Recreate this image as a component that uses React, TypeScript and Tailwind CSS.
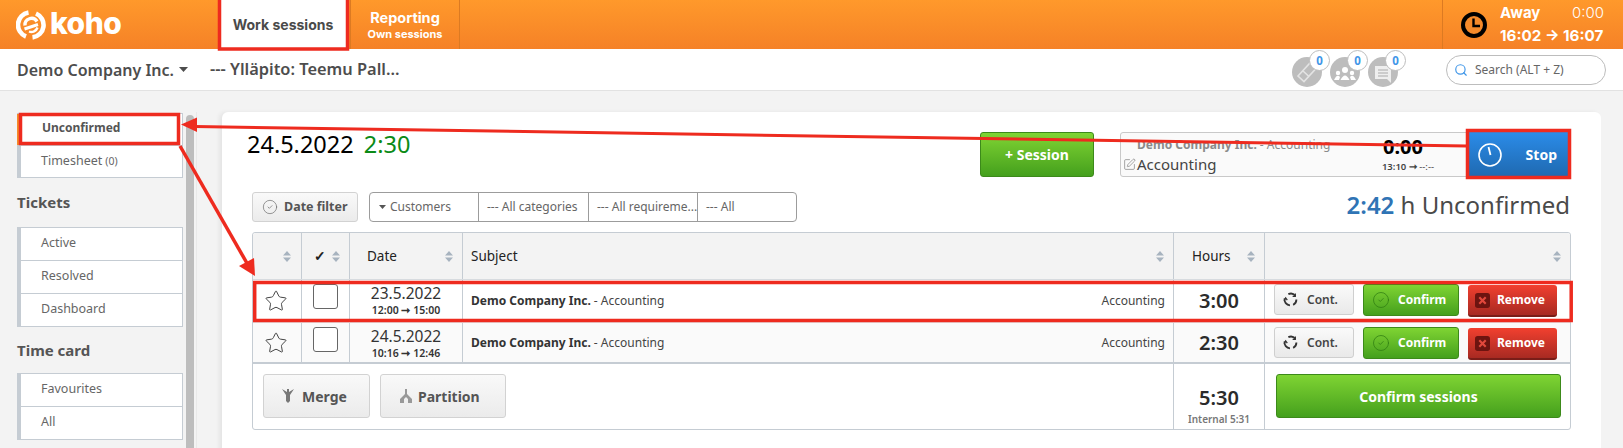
import { Star, CircleCheck, SquarePen, Search } from "lucide-react";

function Sort() {
  return (
    <svg width="8" height="11" viewBox="0 0 8 11" className="shrink-0">
      <path d="M4 0 L8 4.5 H0 Z M4 11 L8 6.5 H0 Z" fill="#a7b3bf" />
    </svg>
  );
}

function ContIcon() {
  return (
    <svg width="15" height="15" viewBox="0 0 14 14" fill="none" stroke="#333" strokeWidth="1.7">
      <path d="M5 2 A5.5 5.5 0 0 1 11.5 3.5" />
      <path d="M12.5 7 A5.5 5.5 0 0 1 9.5 12" />
      <path d="M6.5 12.5 A5.5 5.5 0 0 1 1.5 6" />
      <path d="M11.5 1.5 V4 H9" strokeWidth="1.2" />
      <path d="M1 8 L2.5 5.5 L4 7.5" strokeWidth="1.2" />
    </svg>
  );
}

function XSquare() {
  return (
    <svg width="15" height="15" viewBox="0 0 14 14">
      <rect width="14" height="14" rx="2.5" fill="#6d1410" />
      <path d="M4 4 L10 10 M10 4 L4 10" stroke="#e2483c" strokeWidth="2" />
    </svg>
  );
}

function Row({ date, time, hours, bg }: { date: string; time: string; hours: string; bg: string }) {
  const cell = "border-r border-[#c5ccd3] h-full";
  return (
    <div className={`grid grid-cols-[49px_48px_113px_711px_91px_1fr] items-stretch ${bg}`}>
      <div className={`${cell} flex items-center justify-center pr-[2px]`}>
        <Star size={24} strokeWidth={1} color="#444" />
      </div>
      <div className={`${cell} flex justify-center pt-[4px]`}>
        <div className="w-[25px] h-[25px] rounded-[3px] border border-[#666] bg-white" />
      </div>
      <div className={`${cell} flex flex-col items-center pt-[1px] text-[#333]`}>
        <div className="text-[15.5px] leading-[24px]">{date}</div>
        <div className="text-[10.5px] leading-[12px] font-semibold -mt-[1px]">{time}</div>
      </div>
      <div className={`${cell} flex items-center justify-between pl-[8px] pr-[8px] text-[12px] text-[#444]`}>
        <div><span className="font-bold text-[#333]">Demo Company Inc.</span> - Accounting</div>
        <div>Accounting</div>
      </div>
      <div className={`${cell} flex items-center justify-center text-[20px] font-semibold text-[#2b2b2b]`}>{hours}</div>
      <div className="flex items-start gap-[9px] pl-[9px] pt-[4px]">
        <div className="w-[80px] h-[31px] flex items-center gap-[9px] pl-[8px] rounded-[3px] border border-[#cfcfcf] bg-gradient-to-b from-[#fafafa] to-[#e9e9e9] text-[12px] font-semibold text-[#444]">
          <ContIcon />
          <span>Cont.</span>
        </div>
        <div className="w-[96px] h-[32px] flex items-center gap-[8px] pl-[8px] rounded-[3px] border border-[#3c8a1a] bg-gradient-to-b from-[#7fd433] to-[#44a01d] text-[12px] font-bold text-white">
          <CircleCheck size={18} strokeWidth={1} color="#2f7d12" />
          <span>Confirm</span>
        </div>
        <div className="w-[89px] h-[32px] mt-[1px] flex items-center gap-[7px] pl-[7px] rounded-[3px] border-b-2 border-[#7a1d18] bg-gradient-to-b from-[#f2402f] to-[#a82a22] text-[12px] font-bold text-white">
          <XSquare />
          <span>Remove</span>
        </div>
      </div>
    </div>
  );
}

function SideGroup({ items }: { items: string[] }) {
  return (
    <div className="border border-[#c5ccd3] border-l-[4px] bg-white">
      {items.map((t, i) => (
        <div key={t} className={`flex items-center pl-[20px] pb-[2px] text-[12.5px] text-[#666] ${i ? "h-[33px] border-t border-[#c5ccd3]" : "h-[32px]"}`}>
          {t}
        </div>
      ))}
    </div>
  );
}

function Logo() {
  return (
    <div className="flex items-center gap-[4px] ml-[16px] w-[202px]">
      <svg width="30" height="30" viewBox="0 0 30 30" fill="none" stroke="#fff">
        <path d="M12.5 2.5 A12.5 12.5 0 0 0 10 26.5" strokeWidth="4.6" />
        <path d="M16.5 27.4 A12.5 12.5 0 0 0 20 3.5" strokeWidth="4.6" />
        <path d="M9 15.5 A6.5 6.5 0 0 1 21 11.5" strokeWidth="3.4" />
        <path d="M8.5 19 L22 14.5" strokeWidth="3" />
        <path d="M13 21.5 A6.5 6.5 0 0 0 21.5 17.5" strokeWidth="2.4" />
      </svg>
      <span className="font-['Inter',sans-serif] font-extrabold text-[30px] leading-none tracking-[-0.5px] text-white -mt-[3px]">koho</span>
    </div>
  );
}

function CircleIcon({ children }: { children: React.ReactNode }) {
  return (
    <div className="relative w-[30px] h-[30px] rounded-full bg-[#bdbdbd] flex items-center justify-center">
      {children}
      <div className="absolute -top-[7px] left-[17px] w-[21px] h-[21px] rounded-full bg-white border border-[#bdbdbd] flex items-center justify-center text-[11.5px] font-bold text-[#3f96e8]">
        0
      </div>
    </div>
  );
}

export default function App() {
  return (
    <div className="relative w-[1623px] h-[448px] overflow-hidden bg-[#f3f3f3] font-['Noto_Sans',sans-serif]">
      {/* top bar */}
      <header className="h-[49px] flex items-stretch bg-gradient-to-b from-[#ff992b] to-[#f58127] font-['Inter',sans-serif]">
        <Logo />
        <div className="w-[130px] bg-white flex items-center justify-center text-[14px] font-bold text-[#4a4a4a]">Work sessions</div>
        <div className="w-[110px] ml-[2px] border-l border-r border-[#dc7a22] flex flex-col items-center justify-center text-white font-bold">
          <div className="text-[14.5px] leading-[19px]">Reporting</div>
          <div className="text-[11px] leading-[14px]">Own sessions</div>
        </div>
        <div className="ml-auto w-[181px] border-l border-[#dc7a22] flex items-center text-white">
          <svg width="28" height="28" viewBox="0 0 28 28" className="ml-[17px]">
            <circle cx="14" cy="14" r="11" fill="#f58a2a" stroke="#000" strokeWidth="4" />
            <path d="M13.5 7.5 V15 H20" fill="none" stroke="#000" strokeWidth="2.4" />
          </svg>
          <div className="ml-[12px] w-[104px]">
            <div className="flex justify-between text-[15px] leading-[22px] h-[22px]">
              <span className="font-bold">Away</span>
              <span className="font-light">0:00</span>
            </div>
            <div className="mt-[1px] text-[15.2px] font-bold leading-[22px] whitespace-nowrap">16:02 → 16:07</div>
          </div>
        </div>
      </header>

      {/* sub bar */}
      <div className="h-[42px] flex items-center bg-white border-b border-[#e2e2e2] text-[#4d4d4d]">
        <div className="ml-[17px] text-[16px] font-semibold">Demo Company Inc.</div>
        <svg width="9" height="5" viewBox="0 0 9 5" className="ml-[5px]"><path d="M0 0 H9 L4.5 5 Z" fill="#4d4d4d" /></svg>
        <div className="ml-[22px] text-[16.4px] font-semibold whitespace-nowrap">--- Ylläpito: Teemu Pall...</div>
        <div className="ml-auto flex items-center gap-[8px] mt-[5px] mr-[48px]">
          <CircleIcon>
            <svg width="24" height="24" viewBox="0 0 24 24" fill="none" stroke="#e4e4e4" strokeWidth="1.6">
              <path d="M3 16 L15 3 L21 8.5 L9 21.5 Z M8 11 L14 16.5" />
            </svg>
          </CircleIcon>
          <CircleIcon>
            <svg width="24" height="20" viewBox="0 0 24 20" fill="#fff" className="mt-[3px]">
              <circle cx="12" cy="6" r="3" />
              <circle cx="5" cy="9" r="2.2" />
              <circle cx="19" cy="9" r="2.2" />
              <path d="M7.5 16 Q12 7 16.5 16 Z M1 16 Q4 9.5 7 13 L6 16 Z M23 16 Q20 9.5 17 13 L18 16 Z" />
            </svg>
          </CircleIcon>
          <CircleIcon>
            <svg width="20" height="20" viewBox="0 0 20 20" className="mt-[2px]">
              <path d="M2 3 H18 V20 L14 16 H2 Z" fill="#eee" />
              <path d="M5 7 H15 M5 10 H15 M5 13 H15" stroke="#aaa" strokeWidth="1.2" />
            </svg>
          </CircleIcon>
        </div>
        <div className="w-[160px] h-[30px] mr-[17px] rounded-full border border-[#bdbdbd] flex items-center pl-[7px] gap-[7px] text-[12px] text-[#666]">
          <Search size={14} strokeWidth={2} color="#3f96e8" />
          <span>Search (ALT + Z)</span>
        </div>
      </div>

      {/* body */}
      <div className="flex items-start">
        {/* sidebar */}
        <aside className="ml-[17px] mt-[22px] w-[166px] shrink-0">
          <div className="border border-[#c5ccd3] border-l-[4px] bg-white">
            <div className="h-[31px] -ml-[4px] pb-[3px] border-l-[4px] border-[#f58a2a] flex items-center pl-[21px] text-[12px] font-bold text-[#555]">Unconfirmed</div>
            <div className="h-[32px] border-t border-[#c5ccd3] flex items-center pl-[20px] text-[12.5px] text-[#666]">
              Timesheet <span className="ml-[3px] text-[10.5px]">(0)</span>
            </div>
          </div>
          <div className="mt-[13px] mb-[14px] text-[15px] leading-[22px] font-bold text-[#555]">Tickets</div>
          <SideGroup items={["Active", "Resolved", "Dashboard"]} />
          <div className="mt-[12px] mb-[12px] text-[15px] leading-[22px] font-bold text-[#555]">Time card</div>
          <SideGroup items={["Favourites", "All"]} />
        </aside>

        {/* scrollbar */}
        <div className="ml-[3px] mt-[24px] w-[8px] h-[340px] shrink-0 rounded-t-[4px] bg-[#bdbdbd]" />
        <div className="ml-[2px] mt-[21px] w-[1px] h-[340px] shrink-0 bg-[#e9e9e9]" />

        {/* panel */}
        <main className="ml-[25px] mt-[21px] w-[1379px] h-[340px] shrink-0 rounded-t-[6px] bg-white shadow-[-3px_0_4px_rgba(0,0,0,0.06)] pl-[30px] pr-[31px] pt-[20px]">
          <div className="flex items-start">
            <div className="flex-1 -ml-[5px] -mt-[5px] text-[23.5px] leading-[34px] text-black">
              24.5.2022 <span className="ml-[4px] text-[#0b8a16]">2:30</span>
            </div>
            <div className="w-[114px] h-[45px] rounded-[3px] border border-[#3c8a1a] bg-gradient-to-b from-[#7fd433] to-[#44a01d] flex items-center justify-center text-[14px] font-bold text-white">+ Session</div>
            <div className="ml-[26px] w-[347px] h-[45px] flex border border-[#c9c9c9] rounded-l-[3px] bg-[#fafafa] overflow-hidden">
              <div className="flex-1 pl-[2px]">
                <div className="pl-[14px] pt-[3px] text-[12px] leading-[18px] text-[#8a8a8a] whitespace-nowrap"><span className="font-bold">Demo Company Inc.</span> - Accounting</div>
                <div className="flex items-center gap-[1px] text-[15px] leading-[20px] text-[#444]">
                  <SquarePen size={13} strokeWidth={1.2} color="#777" />
                  <span>Accounting</span>
                </div>
              </div>
              <div className="w-[92px] mr-[17px] flex flex-col items-center">
                <div className="text-[20px] leading-[25px] mt-[1px] font-bold text-black">0:00</div>
                <div className="text-[9.5px] leading-[14px] mt-[1px] ml-[10px] font-semibold text-[#444] whitespace-nowrap">13:10 ➞ <span className="font-normal">--:--</span></div>
              </div>
            </div>
            <div className="w-[103px] h-[45px] bg-gradient-to-b from-[#2b8ce9] to-[#1f69b0] flex items-center text-white">
              <svg width="26" height="26" viewBox="0 0 26 26" fill="none" stroke="#fff" className="ml-[10px]">
                <circle cx="13" cy="13" r="11" strokeWidth="1.6" />
                <path d="M11.5 5 L13.5 13" strokeWidth="1.8" />
              </svg>
              <span className="ml-auto mr-[13px] text-[14px] font-bold">Stop</span>
            </div>
          </div>

          <div className="flex items-center mt-[15px] h-[30px]">
            <div className="w-[106px] h-[30px] rounded-[3px] border border-[#d2d2d2] bg-gradient-to-b from-[#f9f9f9] to-[#ebebeb] flex items-center pl-[9px] gap-[6px] text-[12.5px] font-bold text-[#555]">
              <CircleCheck size={16} strokeWidth={1} color="#666" />
              <span>Date filter</span>
            </div>
            <div className="ml-[11px] w-[428px] h-[30px] rounded-[4px] border border-[#9c9c9c] bg-white flex text-[12px] text-[#666]">
              <div className="w-[109px] flex items-center pl-[9px] gap-[4px] border-r border-[#9c9c9c]">
                <svg width="7" height="4" viewBox="0 0 7 4"><path d="M0 0 H7 L3.5 4 Z" fill="#555" /></svg>
                Customers
              </div>
              <div className="w-[110px] flex items-center pl-[8px] border-r border-[#9c9c9c] whitespace-nowrap">--- All categories</div>
              <div className="w-[109px] flex items-center pl-[8px] border-r border-[#9c9c9c] whitespace-nowrap">--- All requireme...</div>
              <div className="flex-1 flex items-center pl-[8px]">--- All</div>
            </div>
            <div className="ml-auto -mt-[4px] text-[24px] text-[#4a4a4a] whitespace-nowrap">
              <span className="font-semibold text-[#2f74b5]">2:42</span> h Unconfirmed
            </div>
          </div>

          {/* table */}
          <div className="mt-[10px] w-[1319px] rounded-[3px] border border-[#c5ccd3] bg-white">
            <div className="grid grid-cols-[49px_48px_113px_711px_91px_1fr] h-[47px] bg-[#f3f3f3] text-[13.5px] text-[#222] rounded-t-[3px] border-b border-[#d7dbdf]">
              <div className="border-r border-[#c5ccd3] flex items-center justify-end pr-[10px]"><Sort /></div>
              <div className="border-r border-[#c5ccd3] flex items-center justify-end pr-[9px] gap-[6px]"><span className="font-bold">✓</span><Sort /></div>
              <div className="border-r border-[#c5ccd3] flex items-center justify-between pl-[17px] pr-[9px]"><span>Date</span><Sort /></div>
              <div className="border-r border-[#c5ccd3] flex items-center justify-between pl-[8px] pr-[9px]"><span>Subject</span><Sort /></div>
              <div className="border-r border-[#c5ccd3] flex items-center justify-between pl-[18px] pr-[9px]"><span>Hours</span><Sort /></div>
              <div className="flex items-center justify-end pr-[9px]"><Sort /></div>
            </div>
            <div className="h-[42px]"><Row date="23.5.2022" time="12:00 ➞ 15:00" hours="3:00" bg="bg-white h-full" /></div>
            <div className="h-[40px] border-t border-[#e3e6e9]"><Row date="24.5.2022" time="10:16 ➞ 12:46" hours="2:30" bg="bg-[#fafafa] h-full" /></div>
            <div className="grid grid-cols-[921px_91px_1fr] h-[67px] border-t-2 border-[#c5ccd3]">
              <div className="border-r border-[#c5ccd3] flex items-start gap-[10px] pl-[10px] pt-[10px]">
                <div className="w-[107px] h-[44px] rounded-[3px] border border-[#d2d2d2] bg-gradient-to-b from-[#f9f9f9] to-[#ebebeb] flex items-center pl-[18px] gap-[8px] text-[14px] font-bold text-[#555]">
                  <svg width="12" height="14" viewBox="0 0 12 14"><path d="M0 0 L5 3 V0 H7 V3 L12 0 L8 6 V12 L6 14 L4 12 V6 Z" fill="#777" /></svg>
                  Merge
                </div>
                <div className="w-[126px] h-[44px] rounded-[3px] border border-[#d2d2d2] bg-gradient-to-b from-[#f9f9f9] to-[#ebebeb] flex items-center pl-[18px] gap-[5px] text-[14px] font-bold text-[#555]">
                  <svg width="14" height="14" viewBox="0 0 14 14"><path d="M6 0 H8 V5 L13 10 V14 H9 V10 L7 8 L5 10 V14 H1 V10 L6 5 Z" fill="#999" /></svg>
                  Partition
                </div>
              </div>
              <div className="border-r border-[#c5ccd3] flex flex-col items-center justify-end pb-[3px] text-[#2b2b2b]">
                <div className="text-[20px] font-semibold leading-[28px]">5:30</div>
                <div className="text-[10px] font-semibold leading-[14px] text-[#777]">Internal 5:31</div>
              </div>
              <div className="pl-[11px] pt-[10px]">
                <div className="w-[285px] h-[44px] rounded-[3px] border border-[#3c8a1a] bg-gradient-to-b from-[#7fd433] to-[#44a01d] flex items-center justify-center text-[14px] font-bold text-white">Confirm sessions</div>
              </div>
            </div>
          </div>
        </main>
      </div>

      {/* red annotation overlay */}
      <svg width="1623" height="448" viewBox="0 0 1623 448" fill="none" className="absolute left-0 top-0 pointer-events-none">
        <g stroke="#ee2b1f" strokeWidth="3.5">
          <rect x="219.5" y="-2" width="128" height="51" />
          <rect x="20.5" y="114.5" width="158" height="29" />
          <rect x="1467.5" y="130.5" width="102" height="47" />
          <rect x="254.7" y="282.5" width="1316.5" height="38" />
          <path d="M195 126.5 L1467 146" strokeWidth="3" />
          <path d="M180 146 L248 265" strokeWidth="3.5" />
        </g>
        <path d="M181 124.5 L197 117.5 L197 132 Z" fill="#ee2b1f" />
        <path d="M255 276 L239 266 L254 258 Z" fill="#ee2b1f" />
      </svg>
    </div>
  );
}
